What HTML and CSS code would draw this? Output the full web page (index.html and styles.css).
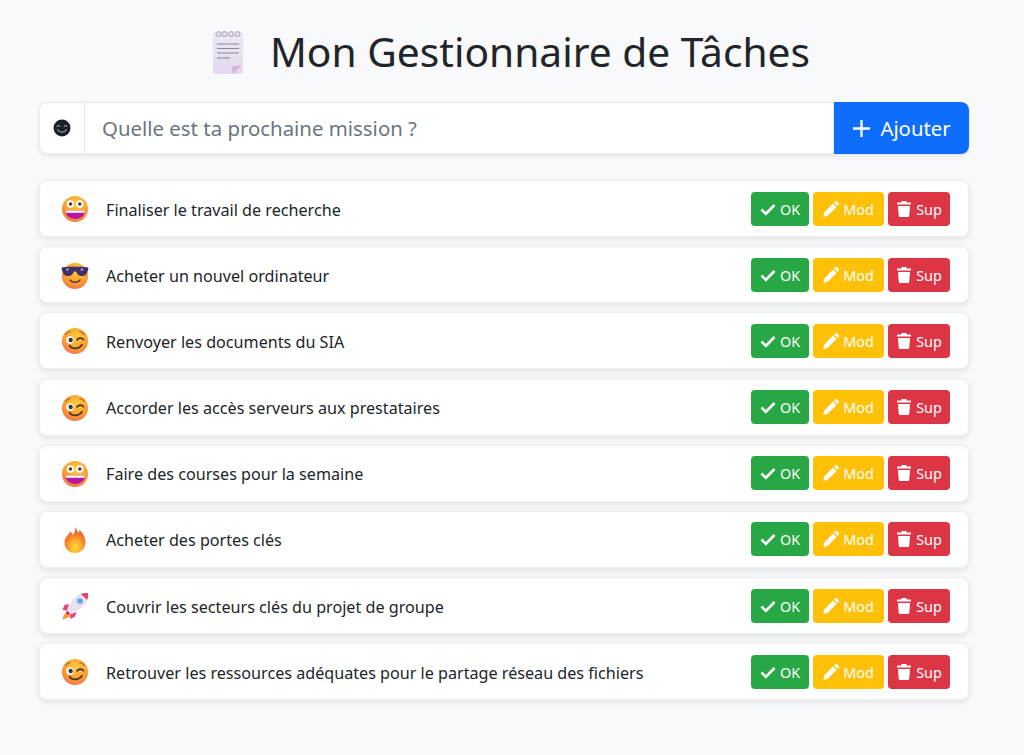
FILE: index.html
```html
<!DOCTYPE html>
<html lang="fr">
<head>
<meta charset="utf-8">
<title>Mon Gestionnaire de Tâches</title>
<link rel="stylesheet" href="styles.css">
</head>
<body>
<svg class="defs" width="0" height="0" aria-hidden="true">
  <defs>
    <radialGradient id="face" cx="55%" cy="32%" r="72%">
      <stop offset="0" stop-color="#ffc93f"/><stop offset=".6" stop-color="#fca12f"/><stop offset=".88" stop-color="#f6803f"/><stop offset="1" stop-color="#ee6d78"/>
    </radialGradient>
    <radialGradient id="flame" cx="52%" cy="78%" r="72%">
      <stop offset="0" stop-color="#ffdb3f"/><stop offset=".35" stop-color="#fdb02e"/><stop offset=".7" stop-color="#f57a2b"/><stop offset="1" stop-color="#dd4f42"/>
    </radialGradient>
    <linearGradient id="paper" x1="0" y1="0" x2="0" y2="1">
      <stop offset="0" stop-color="#eee7f6"/><stop offset="1" stop-color="#e3d8f1"/>
    </linearGradient>
    <pattern id="curl" width="2" height="2" patternUnits="userSpaceOnUse">
      <rect width="2" height="2" fill="#d9c9e4"/><rect width="1" height="1" fill="#b9a9c8"/><rect x="1" y="1" width="1" height="1" fill="#e8a9c4"/>
    </pattern>
    <symbol id="e-grin" viewBox="0 0 28 28">
      <circle cx="14" cy="14" r="13" fill="url(#face)"/>
      <circle cx="9.500" cy="9" r="3.700" fill="#fff"/><circle cx="18.800" cy="9" r="3.700" fill="#fff"/>
      <circle cx="9.500" cy="9" r="1.800" fill="#4a3a3a"/><circle cx="18.800" cy="9" r="1.800" fill="#4a3a3a"/>
      <path d="M4.500 15.500h19.500c.4 4.800-4.200 8.500-9.700 8.500s-10.200-3.700-9.800-8.500z" fill="#b5179e"/>
      <path d="M4.600 15.500h19.300l-.3 2.300H5z" fill="#fff"/>
    </symbol>
    <symbol id="e-cool" viewBox="0 0 28 28">
      <circle cx="14" cy="15" r="13" fill="url(#face)"/>
      <path d="M1 6.500c4-1 22-1 26 0 .8 1 .3 2.500-.3 3.200-.6 4-3.700 5.800-6.700 5.300-2.600-.4-4.200-2.300-5-4.500h-2c-.8 2.200-2.400 4.100-5 4.500-3 .5-6.100-1.300-6.700-5.300C.7 9 .2 7.500 1 6.500z" fill="#3d2f6b"/>
      <circle cx="21" cy="8.500" r="1.500" fill="#8f86c4"/><circle cx="6.500" cy="8.500" r="1.500" fill="#8f86c4"/>
      <path d="M9 19c2.500 3 7.500 3 10 0" fill="none" stroke="#5b3a3a" stroke-width="1.500" stroke-linecap="round"/>
    </symbol>
    <symbol id="e-wink" viewBox="0 0 28 28">
      <circle cx="14" cy="14" r="13" fill="url(#face)"/>
      <path d="M4.500 7.500c1-1.800 2.800-2.700 4.800-2.700M18.500 4.800c2 0 3.800 1 4.700 2.700" fill="none" stroke="#a8672e" stroke-width="1.100" stroke-linecap="round"/>
      <circle cx="9" cy="13" r="3.800" fill="#fff"/><circle cx="9.700" cy="13" r="2.200" fill="#3f3035"/>
      <path d="M16 13c1.500-2.400 5-2.400 6.500-.3" fill="none" stroke="#4a3535" stroke-width="1.600" stroke-linecap="round"/>
      <path d="M8.500 18.500c2.500 4 9 4 12.500-.8" fill="none" stroke="#4a3535" stroke-width="1.600" stroke-linecap="round"/>
    </symbol>
    <symbol id="e-fire" viewBox="0 0 28 28">
      <path d="M14.500 1c1 3 2 4.500 3 5.500.6-.8 1-1.500 1.200-2.500 3.500 3.500 5.800 7.500 5.800 12 0 6.800-4.800 11-10.500 11S3.500 22.800 3.500 16.500C3.500 11 8 9 9 5.500c1.500.8 2.500 2 3 3.500 1.300-2.500 2.700-4.800 2.500-8z" fill="url(#flame)"/>
    </symbol>
    <symbol id="e-rocket" viewBox="0 0 28 28">
      <path d="M5 20l-3.500 6 .5 1.500 7.500-3z" fill="#f59a2c"/>
      <path d="M8 12L3.500 13 1.500 18l4.500.5zM15.500 20l-1.500 4.500-4.500 2.500-.5-4.500z" fill="#ea3f7f"/>
      <path d="M27 1c-5-.5-10 1-14 5.500C9.500 10.500 7.500 15 6 18.500l3.500 3.500c3.500-1.500 8-3.500 12-7C26 11 27.500 6 27 1z" fill="#e6e1ed"/>
      <path d="M27 1c-2.700-.2-5 .1-7 .9L26.100 8C26.900 6 27.200 3.500 27 1z" fill="#e93f63"/>
      <circle cx="19" cy="9" r="2.800" fill="#5aa5ee"/>
      <path d="M6 18.500l3.500 3.500-2.500 1-2-2z" fill="#c22d72"/>
    </symbol>
    <symbol id="i-ok" viewBox="0 0 16 16">
      <path d="M1.500 8.500l4.300 4.300L14.500 4" fill="none" stroke="#fff" stroke-width="2.600"/>
    </symbol>
    <symbol id="i-mod" viewBox="0 0 16 16">
      <path d="M11 1.500l.9-.9c.7-.7 1.700-.7 2.400 0l1.100 1.100c.7.700.7 1.700 0 2.400l-.9.900zM10 2.500L13.500 6 5 14.500c-.3.300-.7.500-1 .6L.5 16 1 12.300c.1-.4.300-.8.500-1z" fill="#fff"/>
    </symbol>
    <symbol id="i-sup" viewBox="0 0 16 16">
      <path d="M5.500 .5c.1-.3.300-.5.600-.5h3.800c.3 0 .5.200.6.500l.3 1H14c.6 0 1 .4 1 1v1H1v-1c0-.6.400-1 1-1h3.200zM2 5h12l-.7 9.500c0 .8-.7 1.500-1.500 1.500H4.200c-.8 0-1.500-.7-1.500-1.500z" fill="#fff"/>
    </symbol>
  </defs>
</svg>
<main class="app">
  <header class="title">
    <svg class="note" viewBox="0 0 34 46" aria-hidden="true">
      <rect x="2" y="4" width="30" height="42" rx="3" fill="url(#paper)"/>
      <g fill="none" stroke="#b6b0bd" stroke-width="1.200"><circle cx="7.500" cy="6" r="2.300"/><circle cx="13.500" cy="6" r="2.300"/><circle cx="20" cy="6" r="2.300"/><circle cx="26.500" cy="6" r="2.300"/></g>
      <g stroke="#8b8991" stroke-width="1.100"><path d="M6 16h22M6 20.500h22M6 25h22"/><path d="M6 30h13"/></g>
      <path d="M21 45v-6l1-1 8-1v1l-7 7z" fill="url(#curl)"/>
    </svg>
    <h1 class="heading">Mon Gestionnaire de Tâches</h1>
  </header>

  <form class="add">
    <span class="add-icon"><svg class="smile" viewBox="0 0 18 18" aria-hidden="true"><circle cx="9" cy="9" r="8.500" fill="#1c1f24"/><path d="M4 7.500c.6-1.200 2.200-1.200 2.900 0M11.100 7.500c.7-1.200 2.300-1.200 2.900 0M4.500 10.500c1.800 3.500 7.200 3.500 9 0" fill="none" stroke="#8b8f96" stroke-width="1.100" stroke-linecap="round"/></svg></span>
    <input class="add-input" type="text" placeholder="Quelle est ta prochaine mission ?">
    <button class="add-btn" type="button"><svg class="plus" viewBox="0 0 20 20" aria-hidden="true"><path d="M10 1v18M1 10h18" stroke="#fff" stroke-width="2.400"/></svg>Ajouter</button>
  </form>

  <ul class="list">
    <li class="card"><svg class="emoji"><use href="#e-grin"/></svg><span class="label">Finaliser le travail de recherche</span><div class="actions"><button class="btn ok"><svg class="ic"><use href="#i-ok"/></svg>OK</button><button class="btn mod"><svg class="ic"><use href="#i-mod"/></svg>Mod</button><button class="btn sup"><svg class="ic"><use href="#i-sup"/></svg>Sup</button></div></li>
    <li class="card"><svg class="emoji"><use href="#e-cool"/></svg><span class="label">Acheter un nouvel ordinateur</span><div class="actions"><button class="btn ok"><svg class="ic"><use href="#i-ok"/></svg>OK</button><button class="btn mod"><svg class="ic"><use href="#i-mod"/></svg>Mod</button><button class="btn sup"><svg class="ic"><use href="#i-sup"/></svg>Sup</button></div></li>
    <li class="card"><svg class="emoji"><use href="#e-wink"/></svg><span class="label">Renvoyer les documents du SIA</span><div class="actions"><button class="btn ok"><svg class="ic"><use href="#i-ok"/></svg>OK</button><button class="btn mod"><svg class="ic"><use href="#i-mod"/></svg>Mod</button><button class="btn sup"><svg class="ic"><use href="#i-sup"/></svg>Sup</button></div></li>
    <li class="card"><svg class="emoji"><use href="#e-wink"/></svg><span class="label">Accorder les accès serveurs aux prestataires</span><div class="actions"><button class="btn ok"><svg class="ic"><use href="#i-ok"/></svg>OK</button><button class="btn mod"><svg class="ic"><use href="#i-mod"/></svg>Mod</button><button class="btn sup"><svg class="ic"><use href="#i-sup"/></svg>Sup</button></div></li>
    <li class="card"><svg class="emoji"><use href="#e-grin"/></svg><span class="label">Faire des courses pour la semaine</span><div class="actions"><button class="btn ok"><svg class="ic"><use href="#i-ok"/></svg>OK</button><button class="btn mod"><svg class="ic"><use href="#i-mod"/></svg>Mod</button><button class="btn sup"><svg class="ic"><use href="#i-sup"/></svg>Sup</button></div></li>
    <li class="card"><svg class="emoji"><use href="#e-fire"/></svg><span class="label">Acheter des portes clés</span><div class="actions"><button class="btn ok"><svg class="ic"><use href="#i-ok"/></svg>OK</button><button class="btn mod"><svg class="ic"><use href="#i-mod"/></svg>Mod</button><button class="btn sup"><svg class="ic"><use href="#i-sup"/></svg>Sup</button></div></li>
    <li class="card"><svg class="emoji"><use href="#e-rocket"/></svg><span class="label">Couvrir les secteurs clés du projet de groupe</span><div class="actions"><button class="btn ok"><svg class="ic"><use href="#i-ok"/></svg>OK</button><button class="btn mod"><svg class="ic"><use href="#i-mod"/></svg>Mod</button><button class="btn sup"><svg class="ic"><use href="#i-sup"/></svg>Sup</button></div></li>
    <li class="card"><svg class="emoji"><use href="#e-wink"/></svg><span class="label">Retrouver les ressources adéquates pour le partage réseau des fichiers</span><div class="actions"><button class="btn ok"><svg class="ic"><use href="#i-ok"/></svg>OK</button><button class="btn mod"><svg class="ic"><use href="#i-mod"/></svg>Mod</button><button class="btn sup"><svg class="ic"><use href="#i-sup"/></svg>Sup</button></div></li>
  </ul>
</main>
</body>
</html>
```
FILE: styles.css
```css
* { box-sizing: border-box; }
html, body { margin: 0; height: 100%; }
body {
  background: #f8f9fa;
  color: #212529;
  font-family: "Noto Sans", "Open Sans", "Liberation Sans", sans-serif;
  overflow: hidden;
}
.defs { position: absolute; }
.app { width: 930px; margin-left: 39px; padding-top: 24px; }

.title { display: flex; justify-content: center; align-items: center; gap: 25px; height: 54px; margin-bottom: 24px; padding-left: 13px; }
.note { width: 34px; height: 46px; }
.heading { margin: 0; font-size: 40.7px; font-weight: 400; line-height: 54px; }

.add {
  display: flex; height: 52px; margin-bottom: 26px;
  border-radius: 8px; background: #fff;
  box-shadow: 0 2px 4px rgba(0,0,0,.08);
}
.add-icon {
  width: 46px; display: flex; align-items: center; justify-content: center;
  border: 1px solid #e7e9ec; border-radius: 8px 0 0 8px; background: #fff;
}
.smile { width: 18px; height: 18px; }
.add-input {
  flex: 1; min-width: 0; border: 1px solid #e7e9ec; border-left: 0; outline: 0;
  padding: 0 17px; font: inherit; font-size: 20.4px; color: #212529; background: #fff;
}
.add-input::placeholder { color: #6c757d; opacity: 1; }
.add-btn {
  width: 135px; border: 0; border-radius: 0 8px 8px 0; background: #0d6efd; color: #fff;
  font: inherit; font-size: 20.3px; display: flex; align-items: center; justify-content: center; gap: 9px;
}
.plus { width: 19px; height: 19px; }

.list { list-style: none; margin: 0; padding: 0; display: flex; flex-direction: column; gap: 9.2px; }
.card {
  height: 57px; display: flex; align-items: center; padding: 0 18px 0 21px;
  background: #fff; border-radius: 8px;
  border: 1px solid #eceef1;
  box-shadow: 0 2px 6px rgba(0,0,0,.1);
}
.emoji { width: 28px; height: 28px; flex: none; margin-top: 1px; }
.label { flex: 1; margin-left: 17px; padding-top: 2px; font-size: 16.15px; }
.actions { display: flex; gap: 4px; }
.btn {
  height: 34px; border: 0; border-radius: 4px; color: #fff; font: inherit; font-size: 14.4px;
  display: flex; align-items: center; justify-content: center; gap: 4px; padding: 1px 0 0;
}
.ic { width: 16px; height: 16px; margin-top: -1px; }
.ok { width: 58px; background: #28a745; }
.mod { width: 71px; background: #ffc107; }
.sup { width: 62px; background: #dc3545; }
```
